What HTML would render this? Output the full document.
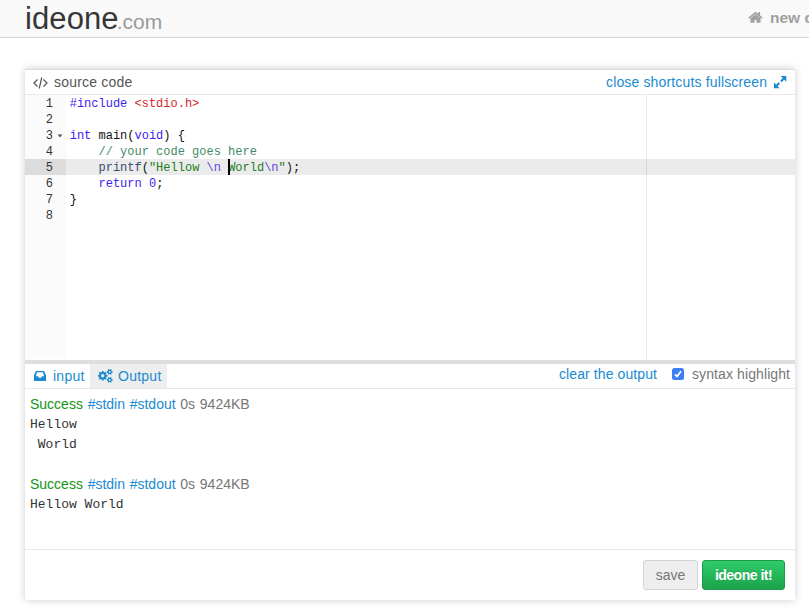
<!DOCTYPE html>
<html><head><meta charset="utf-8">
<style>
*{box-sizing:border-box;margin:0;padding:0}
html,body{width:809px;height:610px;overflow:hidden;background:#fff;font-family:"Liberation Sans",sans-serif}
.a{position:absolute;white-space:nowrap}
#hdr{position:absolute;left:0;top:0;width:809px;height:38px;background:#f9f9f9;border-bottom:1px solid #d6d6d6}
#logo{left:25px;top:1px;font-size:31px;color:#363636;line-height:36px;letter-spacing:0.1px}
#logo span{font-size:21px;color:#999;letter-spacing:0;margin-left:-2px}
#newc{left:770px;top:9px;font-size:15.5px;font-weight:bold;color:#a0a0a0;line-height:18px}
#panel{position:absolute;left:25px;top:69px;width:770px;height:531px;background:#fff;border-top:1px solid #dadada;box-shadow:0 0 8px rgba(0,0,0,0.2)}
#ph{position:absolute;left:0;top:0;width:770px;height:25px;border-bottom:1px solid #e8e8e8}
.hl{left:29px;top:4px;font-size:14px;color:#555;line-height:17px;letter-spacing:0.2px}
.hr{left:581px;top:4px;font-size:14px;color:#1a8bd0;line-height:17px;letter-spacing:0.15px}
#ed{position:absolute;left:0;top:25px;width:770px;height:265px;background:#fff}
#gut{position:absolute;left:0;top:0;width:41px;height:264px;background:#fbfbfb}
.ln{position:absolute;left:0;width:41px;height:16px;font-family:"Liberation Mono",monospace;font-size:12px;line-height:16px;text-align:right;padding-right:13px;color:#333;top:1px}
.cl{position:absolute;left:44.7px;height:16px;font-family:"Liberation Mono",monospace;font-size:12px;line-height:16px;white-space:pre;color:#111}
#act{position:absolute;left:41px;top:64px;width:730px;height:16px;background:#ebebeb}
#actg{position:absolute;left:0;top:64px;width:41px;height:16px;background:#dcdcdc}
#margin{position:absolute;left:621px;top:0;width:1px;height:265px;background:rgba(0,0,0,0.095)}
.kw{color:#3c1ef2}.fn{color:#3c4c72}.str{color:#1a7f1a}.cm{color:#3f8a6a}.inc{color:#d42828}.esc{color:#6248e0}
#sep{position:absolute;left:0;top:290px;width:770px;height:4px;background:#dedede}
#tabs{position:absolute;left:0;top:294px;width:770px;height:25px;border-bottom:1px solid #e8e8e8}
#tab2{position:absolute;left:65px;top:0;width:77px;height:24px;background:#eeeeee}
.blue{color:#1a8bd0}
.tt{font-size:14px;line-height:17px;top:4px;letter-spacing:0.25px}
.tr{font-size:14px;line-height:17px;top:2px;letter-spacing:0.1px}
.ok{color:#149414}.gr{color:#777}
.mono{font-family:"Liberation Mono",monospace;font-size:13px;color:#333;line-height:20px;white-space:pre}
#foot{position:absolute;left:0;top:479px;width:770px;border-top:1px solid #e8e8e8;height:51px}
#save{position:absolute;left:618px;top:10px;width:55px;height:30px;background:#eeeeee;border:1px solid #d4d4d4;border-radius:3px;color:#777;font-size:14px;text-align:center;line-height:28px}
#run{position:absolute;left:677px;top:10px;width:83px;height:30px;background:linear-gradient(#2fcc6b,#1da34b);border:1px solid #1c9a47;border-radius:3px;color:#fff;font-size:14px;font-weight:bold;text-align:center;line-height:28px;letter-spacing:-0.5px;text-shadow:0 -1px 0 rgba(0,0,0,0.15)}
#cb{position:absolute;left:647px;top:4px;width:12px;height:12px;background:#3b7ff5;border-radius:2.5px}
</style></head><body>
<div id="hdr">
 <div id="logo" class="a">ideone<span>.com</span></div>
 <svg class="a" style="left:748px;top:11px" width="15" height="12" viewBox="0 0 15 12"><path fill="#a0a0a0" d="M7.5 0.8 L0.3 6.5 L1.3 7.7 L7.5 2.8 L13.7 7.7 L14.7 6.5 L12 4.3 L12 1.1 L10.3 1.1 L10.3 2.9 Z M2.5 7.2 L7.5 3.2 L12.5 7.2 L12.5 11.8 L8.4 11.8 L8.4 8.8 L6.6 8.8 L6.6 11.8 L2.5 11.8 Z"/></svg>
 <div id="newc" class="a">new code</div>
</div>
<div id="panel">
 <div id="ph">
  <svg class="a" style="left:8px;top:7px" width="15" height="12" viewBox="0 0 15 12"><path fill="none" stroke="#555" stroke-width="1.2" d="M4.5 2.5 L1 6 L4.5 9.5 M10.5 2.5 L14 6 L10.5 9.5 M8.8 0.5 L6.2 11.5"/></svg>
  <div class="a hl">source code</div>
  <div class="a hr">close shortcuts fullscreen</div>
  <svg class="a" style="left:749px;top:6px" width="13" height="13" viewBox="0 0 13 13"><path fill="#1a8bd0" d="M6.6 0 H12.3 V5.7 Z M0 6.6 V12.3 H5.7 Z"/><path stroke="#1a8bd0" stroke-width="2.1" d="M9.6 2.7 L6.9 5.4 M2.7 9.6 L5.4 6.9"/></svg>
 </div>
 <div id="ed">
  <div id="gut"></div>
  <div id="actg"></div><div id="act"></div>
  <div id="margin"></div>
  <div class="ln" style="top:1px">1</div>
  <div class="ln" style="top:17px">2</div>
  <div class="ln" style="top:33px">3</div>
  <div class="ln" style="top:49px">4</div>
  <div class="ln" style="top:65px">5</div>
  <div class="ln" style="top:81px">6</div>
  <div class="ln" style="top:97px">7</div>
  <div class="ln" style="top:113px">8</div>
  <svg class="a" style="left:31.5px;top:39px" width="6" height="5" viewBox="0 0 6 5"><path fill="#555" d="M0.6 0.6 L5.4 0.6 L3 3.4 Z"/></svg>
  <div class="cl" style="top:1px"><span class="kw">#include</span> <span class="inc">&lt;stdio.h&gt;</span></div>
  <div class="cl" style="top:33px"><span class="kw">int</span> main(<span class="kw">void</span>) {</div>
  <div class="cl" style="top:49px">    <span class="cm">// your code goes here</span></div>
  <div class="cl" style="top:65px">    <span class="fn">printf</span>(<span class="str">"Hellow </span><span class="esc">\n</span><span class="str"> World</span><span class="esc">\n</span><span class="str">"</span>);</div>
  <div class="cl" style="top:81px">    <span class="kw">return</span> <span class="kw">0</span>;</div>
  <div class="cl" style="top:97px">}</div>
  <div class="a" style="left:203px;top:64px;width:2px;height:16px;background:#000"></div>
 </div>
 <div id="sep"></div>
 <div id="tabs">
  <div id="tab2"></div>
  <svg class="a" style="left:9px;top:7px" width="12" height="11" viewBox="0 0 12 11"><path fill="#1a8bd0" fill-rule="evenodd" d="M1.9 0 H10 L12 4.2 V9.9 H0 V4.2 Z M3 1.3 H8.9 L10.1 5.3 H8 L7.1 6.8 H4.9 L4 5.3 H1.9 Z"/></svg>
  <div class="a tt blue" style="left:28px">input</div>
  <svg class="a" style="left:72px;top:5px" width="17" height="15" viewBox="0 0 17 15"><path fill="#1a8bd0" fill-rule="evenodd" d="M10.51 5.88 L10.51 7.72 L9.28 7.72 L8.88 8.68 L9.75 9.55 L8.45 10.85 L7.58 9.98 L6.62 10.38 L6.62 11.61 L4.78 11.61 L4.78 10.38 L3.82 9.98 L2.95 10.85 L1.65 9.55 L2.52 8.68 L2.12 7.72 L0.89 7.72 L0.89 5.88 L2.12 5.88 L2.52 4.92 L1.65 4.05 L2.95 2.75 L3.82 3.62 L4.78 3.22 L4.78 1.99 L6.62 1.99 L6.62 3.22 L7.58 3.62 L8.45 2.75 L9.75 4.05 L8.88 4.92 L9.28 5.88 Z M4.00 6.80 a1.7 1.7 0 1 0 3.4 0 a1.7 1.7 0 1 0 -3.4 0 Z M15.61 2.15 L15.61 3.65 L14.78 3.62 L14.37 4.34 L14.80 5.04 L13.51 5.79 L13.11 5.06 L12.29 5.06 L11.89 5.79 L10.60 5.04 L11.03 4.34 L10.62 3.62 L9.79 3.65 L9.79 2.15 L10.62 2.18 L11.03 1.46 L10.60 0.76 L11.89 0.01 L12.29 0.74 L13.11 0.74 L13.51 0.01 L14.80 0.76 L14.37 1.46 L14.78 2.18 Z M11.80 2.90 a0.9 0.9 0 1 0 1.8 0 a0.9 0.9 0 1 0 -1.8 0 Z M15.61 10.15 L15.61 11.65 L14.78 11.62 L14.37 12.34 L14.80 13.04 L13.51 13.79 L13.11 13.06 L12.29 13.06 L11.89 13.79 L10.60 13.04 L11.03 12.34 L10.62 11.62 L9.79 11.65 L9.79 10.15 L10.62 10.18 L11.03 9.46 L10.60 8.76 L11.89 8.01 L12.29 8.74 L13.11 8.74 L13.51 8.01 L14.80 8.76 L14.37 9.46 L14.78 10.18 Z M11.80 10.90 a0.9 0.9 0 1 0 1.8 0 a0.9 0.9 0 1 0 -1.8 0 Z"/></svg>
  <div class="a tt blue" style="left:93px">Output</div>
  <div class="a tr blue" style="left:534px">clear the output</div>
  <div id="cb"><svg style="display:block" width="12" height="12" viewBox="0 0 12 12"><path fill="none" stroke="#fff" stroke-width="1.8" d="M2.9 6.3 L5.1 8.4 L9 3.3"/></svg></div>
  <div class="a tr gr" style="left:667px">syntax highlight</div>
 </div>
 <div class="a" style="left:5px;top:326px;font-size:14px;line-height:17px;word-spacing:0.8px"><span class="ok">Success</span> <span class="blue">#stdin</span> <span class="blue">#stdout</span> <span class="gr">0s 9424KB</span></div>
 <div class="a mono" style="left:5px;top:345px;line-height:19.6px">Hellow
 World</div>
 <div class="a" style="left:5px;top:406px;font-size:14px;line-height:17px;word-spacing:0.8px"><span class="ok">Success</span> <span class="blue">#stdin</span> <span class="blue">#stdout</span> <span class="gr">0s 9424KB</span></div>
 <div class="a mono" style="left:5px;top:425px">Hellow World</div>
 <div id="foot">
  <div id="save">save</div>
  <div id="run">ideone it!</div>
 </div>
</div>
</body></html>
